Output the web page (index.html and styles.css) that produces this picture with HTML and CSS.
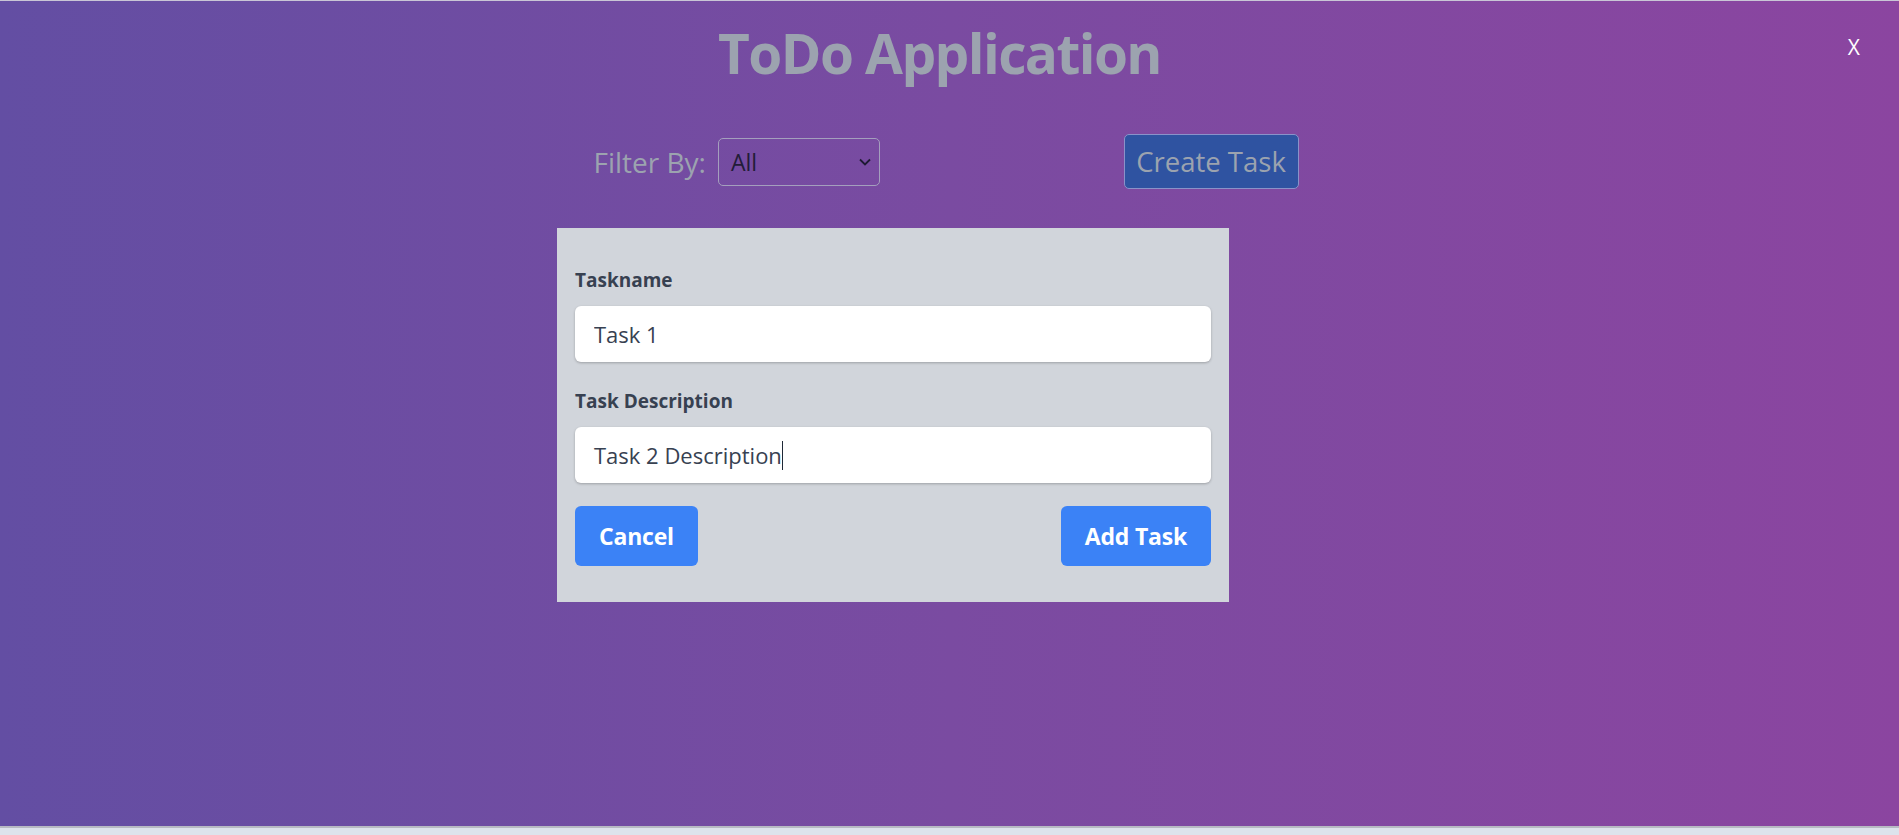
FILE: index.html
```html
<!DOCTYPE html>
<html lang="en">
<head>
<meta charset="utf-8">
<title>ToDo Application</title>
<link rel="stylesheet" href="styles.css">
</head>
<body>
<div class="app">
  <button class="close-btn" type="button">X</button>
  <h1 class="title">ToDo Application</h1>
  <div class="toolbar">
    <div class="filter">
      <span class="filter-label">Filter By:</span>
      <div class="select">
        <span class="select-value">All</span>
        <svg class="chevron" width="12" height="8" viewBox="0 0 12 8"><path d="M1 1.5 L6 6.5 L11 1.5" fill="none" stroke="#1f1a33" stroke-width="1.8"/></svg>
      </div>
    </div>
    <button class="create-btn" type="button">Create Task</button>
  </div>
  <form class="task-form">
    <label class="field-label" for="taskname">Taskname</label>
    <input class="field-input" id="taskname" type="text" value="Task 1">
    <label class="field-label second" for="taskdesc">Task Description</label>
    <div class="field-input fake-input" id="taskdesc"><span>Task 2 Description</span><span class="caret"></span></div>
    <div class="actions">
      <button class="btn" type="button">Cancel</button>
      <button class="btn" type="button">Add Task</button>
    </div>
  </form>
</div>
<div class="bottom-strip"></div>
</body>
</html>
```

FILE: styles.css
```css
html, body {
  margin: 0;
  padding: 0;
}
body {
  font-family: "Open Sans", "Noto Sans", sans-serif;
  width: 1899px;
  height: 835px;
  overflow: hidden;
  background: #dde3ec;
}
.app {
  position: relative;
  height: 826px;
  box-sizing: border-box;
  border-top: 1px solid #c9c6d6;
  background: linear-gradient(to right, #634ea3 0%, #7a4ba1 50%, #8b45a0 100%);
  display: flex;
  flex-direction: column;
}
.close-btn {
  position: absolute;
  top: 32px;
  right: 39px;
  background: none;
  border: none;
  color: #ffffff;
  font-family: "Open Sans", sans-serif;
  font-size: 21px;
  padding: 0;
  cursor: pointer;
}
.title {
  margin: 0;
  padding: 13px 20px 0 0;
  height: 90px;
  box-sizing: border-box;
  text-align: center;
  font-size: 55px;
  font-weight: 700;
  line-height: 78px;
  color: #9ca3af;
  letter-spacing: -1.6px;
}
.toolbar {
  margin-top: 43px;
  margin-left: calc(50% - 356px);
  width: 705px;
  display: flex;
  align-items: center;
  justify-content: space-between;
}
.filter {
  display: flex;
  align-items: center;
  gap: 12px;
}
.filter-label {
  font-size: 28px;
  color: #9ca3af;
  line-height: 40px;
}
.select {
  width: 162px;
  height: 48px;
  box-sizing: border-box;
  border: 1px solid #a49fbd;
  border-radius: 5px;
  display: flex;
  align-items: center;
  justify-content: space-between;
  padding: 0 8px 0 12px;
}
.select-value {
  font-size: 23px;
  color: #221c38;
}
.chevron {
  display: block;
}
.create-btn {
  width: 175px;
  height: 55px;
  box-sizing: border-box;
  background: #2f53a1;
  border: 1px solid #8a92c9;
  border-radius: 5px;
  color: #9ca3af;
  font-family: "Open Sans", sans-serif;
  font-size: 27.5px;
  padding: 0;
}
.task-form {
  margin-top: 39px;
  margin-left: calc(50% - 392.5px);
  width: 672px;
  box-sizing: border-box;
  background: #d1d5db;
  padding: 38px 18px 36px;
  display: flex;
  flex-direction: column;
}
.field-label {
  font-size: 19px;
  font-weight: 700;
  line-height: 28px;
  color: #374151;
}
.field-label.second {
  margin-top: 25px;
}
.field-input {
  margin-top: 12px;
  height: 56px;
  box-sizing: border-box;
  border: none;
  border-radius: 6px;
  background: #ffffff;
  box-shadow: 0 1px 3px rgba(0, 0, 0, 0.18), 0 1px 2px rgba(0, 0, 0, 0.08);
  padding: 0 19px;
  font-family: "Open Sans", sans-serif;
  font-size: 22px;
  color: #374151;
  outline: none;
  width: 100%;
}
.fake-input {
  display: flex;
  align-items: center;
}
.caret {
  display: inline-block;
  width: 1px;
  height: 29px;
  background: #1f2937;
}
.actions {
  margin-top: 23px;
  display: flex;
  justify-content: space-between;
}
.btn {
  height: 60px;
  padding: 0 24px;
  border: none;
  border-radius: 6px;
  background: #3b82f6;
  color: #ffffff;
  font-family: "Open Sans", sans-serif;
  font-size: 23px;
  font-weight: 700;
  letter-spacing: -0.2px;
}
.bottom-strip {
  height: 9px;
  border-top: 2px solid #b7bac3;
  background: #dde3ec;
}
```
